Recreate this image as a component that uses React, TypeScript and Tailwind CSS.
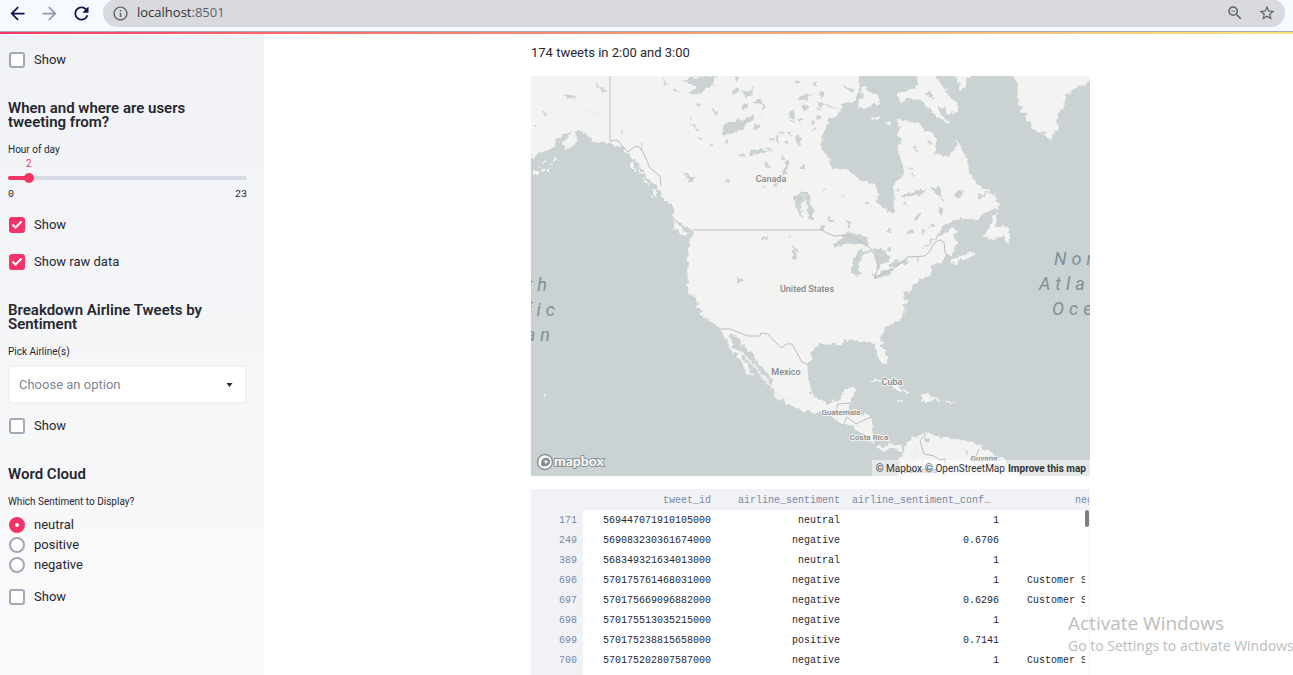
import type { ReactNode } from "react";
import {
  MdArrowBack,
  MdArrowForward,
  MdInfoOutline,
  MdOutlineZoomOut,
  MdRefresh,
  MdStarBorder,
} from "react-icons/md";

const land = [
  // North and Central America
  "520,60 531,160 538,154 546,152 553,146 558,140 563,134 571,131 569,136 562,143 564,149 573,146 577,140 575,134 580,131 586,133 591,139 600,142 610,143 617,145 626,151 631,158 640,165 645,174 652,182 660,188 662,196 668,204 674,208 672,217 682,224 690,229 693,235 690,241 688,260 687,272 689,293 697,298 698,308 705,318 713,323 720,329 727,342 732,353 740,358 745,370 753,378 748,366 742,357 737,350 731,341 729,333 735,334 742,345 755,358 765,370 773,380 773,392 783,402 797,408 813,413 823,412 835,417 840,422 853,427 858,432 870,440 877,448 885,452 890,448 897,448 901,455 899,468 897,490 1030,490 1019,473 1010,465 995,455 983,448 973,442 963,440 953,438 943,438 933,435 925,432 910,438 903,450 901,445 890,443 885,447 878,445 873,437 872,425 873,417 860,413 850,412 850,402 857,388 845,388 841,400 827,403 815,398 810,390 807,374 810,362 812,352 818,345 842,344 843,341 862,340 872,343 875,342 877,355 882,363 887,366 887,357 882,345 880,333 890,325 900,320 907,310 902,305 907,302 903,295 905,290 909,293 913,285 920,280 930,276 932,265 943,260 948,256 953,253 957,243 952,237 958,232 953,228 943,233 932,243 922,248 935,237 947,223 960,218 977,220 987,212 999,208 997,197 983,187 977,183 970,172 965,155 957,142 953,152 947,158 935,153 935,135 925,132 918,122 898,120 900,145 897,152 903,160 905,173 893,185 895,213 888,213 878,202 877,185 863,182 847,170 832,168 828,155 821,152 823,135 830,118 840,113 843,103 855,103 860,88 858,60",
  // Southampton Island
  "862,85 870,92 878,97 880,103 873,103 866,111 857,107 861,98",
  // Baffin Island
  "918,70 916,88 905,90 897,93 899,100 916,98 927,107 938,118 950,124 942,114 937,105 945,110 953,116 957,112 956,103 948,94 941,85 937,78 936,70",
  "952,70 958,80 960,90 964,88 967,78 972,74 970,60",
  "871,119 878,114 880,117 873,121",
  "887,122 891,121 891,126 888,126",
  // Greenland
  "1008,60 1017,85 1019,105 1027,118 1037,133 1045,131 1050,141 1057,128 1060,112 1067,95 1077,87 1084,84 1100,76 1100,60",
  // Newfoundland and Nova Scotia
  "998,211 993,217 989,228 984,237 993,238 1004,237 1007,241 1011,243 1008,234 1006,227 1000,226 995,226",
  "951,261 960,256 970,253 977,254 968,258 958,262 953,264",
  // Vancouver Island
  "671,218 677,224 685,232 690,236 684,235 676,229",
  // Caribbean islands
  "869,382 876,379 885,380 896,386 904,390 912,393 903,393 894,388 882,382",
  "921,394 929,394 940,400 932,401 926,403 920,400",
  "897,401 904,402 900,403",
  "947,401 953,401 952,403 947,403",
  "914,401 918,401 916,402",
  "544,392 547,395 544,399",
];

const water = [
  // Great Bear, Great Slave, Athabasca, Winnipeg
  "682,80 692,77 717,76 713,86 706,88 701,94 690,94 696,86",
  "722,134 725,123 742,120 756,114 750,122 738,132 728,135",
  "747,153 755,149 775,150 762,153 752,155",
  "793,198 801,190 805,198 800,206 803,218 800,217 796,206",
  "803,192 808,192 813,208 813,220 809,219 807,206",
  "782,176 785,162 789,160 789,170",
  // Great Lakes
  "833,246 843,236 850,231 858,234 866,238 869,246 858,243 845,244 837,247",
  "853,258 858,251 866,249 872,252 862,255 859,264 860,275 855,278 852,268",
  "872,249 882,249 890,256 889,263 883,262 880,268 877,270 876,258",
  "874,276 882,271 893,268 893,271 880,279 874,279",
  "889,265 896,261 907,260 907,263 895,267 889,267",
  // Canadian Shield and Quebec
  "689,117 691,116 690,123 695,126 700,129 698,130 690,124",
  "683,170 689,176 695,178 691,183 687,177",
  "724,180 731,182 728,184",
  "788,112 794,108 795,118 789,118",
  "799,97 812,94 810,98 800,101",
  "820,92 825,95 822,97 818,95",
  "777,133 780,135 778,144 775,141",
  "796,135 802,138 800,146 797,142",
  "753,103 760,98 765,107 761,114 763,107 759,103",
  "713,108 718,112 717,114 712,110",
  "750,91 754,84 751,96 746,98 741,92",
  "734,76 740,77 738,82 735,80",
  "841,84 850,88 855,90 852,93 846,88",
  "813,101 826,104 840,110 828,107",
  "924,92 932,93 934,99 928,98",
  "901,195 911,192 921,190 926,188 922,194 905,198",
  "931,187 940,187 942,196 944,205 940,197 933,190",
  "954,195 961,188 964,192 957,199",
  "978,196 990,190 985,195 979,199",
  "937,210 940,206 943,213 939,217",
  "914,220 919,213 921,215 916,221",
  "928,227 933,224 935,227",
  "903,203 907,202 909,208 904,205",
  "828,218 835,219 834,222 829,221",
  "846,221 851,221 851,227 847,228",
  "821,189 825,187 825,190 821,191",
  "840,194 845,195 843,197",
  "819,226 825,225 825,230 820,230",
  "810,204 813,210 813,219 810,217",
  "912,146 918,148 917,150 912,148",
  "907,168 913,166 912,170 908,169",
  "911,173 917,176 913,177",
  "787,236 791,235 791,238",
  "761,238 769,237 764,240",
  "794,246 797,248 796,260 794,258",
  "738,277 743,280 741,284 738,281",
  "792,256 796,257 794,260",
  "925,435 929,441 927,445 924,441",
  "966,449 969,452 966,456",
  "561,95 572,95 578,98 569,97",
  "595,82 600,88 608,91 601,91 596,86",
  "664,76 667,85 666,87 664,81",
  "619,129 623,132 622,134",
  "642,144 644,145 643,151 641,149",
];

const specks: [number, number, number][] = [
  [698, 105, 2], [757, 126, 3], [711, 145, 2], [727, 141, 2], [742, 155, 2], [700, 138, 1], [767, 165, 3], [803, 167, 3],
  [775, 185, 2], [763, 187, 2], [797, 83, 3], [805, 107, 3], [813, 122, 2], [818, 117, 3], [790, 134, 2], [786, 142, 2],
  [745, 106, 3], [735, 91, 3], [778, 137, 2], [819, 108, 2], [889, 231, 2], [911, 232, 3], [923, 232, 2], [892, 174, 1],
  [816, 85, 2], [801, 121, 2], [771, 139, 2], [820, 104, 2], [782, 133, 2], [889, 249, 2], [793, 121, 2], [807, 95, 2],
  [676, 91, 2], [545, 114, 1], [535, 126, 1], [930, 143, 2], [783, 158, 2], [899, 190, 2], [868, 203, 2], [815, 130, 2],
];

const inlets: [number, number][] = [
  [630, 163], [634, 168], [638, 166], [640, 172], [644, 178], [648, 183], [652, 190], [650, 195], [657, 185],
  [645, 170], [655, 193], [637, 171], [642, 165], [631, 158], [554, 157], [549, 163], [543, 160], [538, 166],
  [534, 171], [558, 161], [548, 168], [541, 169],
];

const borders = [
  "610,76 610,141 617,140 628,152 634,147 638,146 643,152 650,168 660,176 661,186",
  "692,230 822,230",
  "820,229 825,232 834,236 848,235 858,240 870,248 877,258 878,268 874,278 893,269 908,257 925,256 929,252 935,242 940,240 944,242 945,252 948,257",
  "918,257 918,262",
  "720,329 730,329 748,336 760,336 761,333 768,334 777,344 782,348 786,344 792,344 802,362 809,365",
  "835,412 838,404 850,403 850,409 841,416",
  "844,423 847,417 856,424 866,419 873,417",
  "876,447 875,440",
  "926,433 920,441 924,454 934,456 940,460 945,459 946,470",
  "900,453 904,452",
  "979,449 976,456 982,463",
  "985,456 990,466 1000,464",
];

function MapLabel({ x, y, size, children }: { x: number; y: number; size: number; children: ReactNode }) {
  return (
    <text
      x={x}
      y={y}
      fontSize={size}
      textAnchor="middle"
      className="fill-[#858889] stroke-[#f3f3f2] stroke-2 font-['Roboto',sans-serif] font-medium [paint-order:stroke]"
    >
      {children}
    </text>
  );
}

function OceanLabel({ lines, anchor }: { lines: [string, number, number][]; anchor: "start" | "end" }) {
  return (
    <g className="fill-[#7f9191] font-['Roboto',sans-serif] text-[18px] italic tracking-[5px]">
      {lines.map(([text, x, y]) => (
        <text key={text} x={x} y={y} textAnchor={anchor}>
          {text}
        </text>
      ))}
    </g>
  );
}

function TweetMap() {
  return (
    <div className="relative h-[400px] overflow-hidden bg-[#cad2d3]">
      <svg
        className="h-full w-full"
        viewBox="531 76 559 400"
        preserveAspectRatio="xMidYMid slice"
        role="img"
        aria-label="Map of North America"
      >
        <defs>
          <filter id="coast" filterUnits="userSpaceOnUse" x="500" y="50" width="620" height="450">
            <feTurbulence type="fractalNoise" baseFrequency="0.16" numOctaves="3" seed="7" />
            <feDisplacementMap in="SourceGraphic" scale="8" xChannelSelector="R" yChannelSelector="G" />
          </filter>
          <filter id="lake" filterUnits="userSpaceOnUse" x="500" y="50" width="620" height="450">
            <feTurbulence type="fractalNoise" baseFrequency="0.22" numOctaves="2" seed="3" />
            <feDisplacementMap in="SourceGraphic" scale="7" xChannelSelector="R" yChannelSelector="G" />
          </filter>
        </defs>
        <rect x="400" y="0" width="900" height="600" fill="#cad2d3" />
        <g filter="url(#coast)" fill="#f3f3f2">
          {land.map((points) => (
            <polygon key={points} points={points} />
          ))}
          {inlets.map(([x, y], i) => (
            <rect key={`${x}-${y}`} x={x} y={y} width={i % 3 === 0 ? 4 : 2} height={i % 2 === 0 ? 4 : 2} />
          ))}
        </g>
        <g filter="url(#lake)" fill="#cad2d3">
          {water.map((points) => (
            <polygon key={points} points={points} />
          ))}
          {specks.map(([x, y, r]) => (
            <ellipse key={`${x}-${y}`} cx={x} cy={y} rx={r} ry={r > 1 ? r - 0.5 : 1} />
          ))}
        </g>
        <g fill="none" stroke="#eeeeec" strokeWidth="2" filter="url(#lake)">
          <polyline points="556,120 566,112 582,108 596,114 606,122" />
          <polyline points="693,280 702,298 714,316" />
          <polyline points="738,350 752,364 766,380 778,394" />
          <polyline points="776,396 790,398 804,402" />
          <polyline points="918,446 912,460 908,474" />
        </g>
        <g fill="none" stroke="#bcbebe" strokeWidth="1">
          {borders.map((points) => (
            <polyline key={points} points={points} />
          ))}
        </g>
        <MapLabel x={771} y={182} size={9}>Canada</MapLabel>
        <MapLabel x={807} y={292} size={9}>United States</MapLabel>
        <MapLabel x={786} y={375} size={9}>Mexico</MapLabel>
        <MapLabel x={892} y={385} size={9}>Cuba</MapLabel>
        <MapLabel x={841} y={415} size={8}>Guatemala</MapLabel>
        <MapLabel x={869} y={440} size={8}>Costa Rica</MapLabel>
        <MapLabel x={984} y={461} size={8}>Guyana</MapLabel>
        <MapLabel x={920} y={473} size={8}>Colombia</MapLabel>
        <OceanLabel anchor="start" lines={[["North", 1054, 265], ["Atlantic", 1039, 290], ["Ocean", 1052, 315]]} />
        <OceanLabel anchor="end" lines={[["North", 552, 291], ["Pacific", 560, 316], ["Ocean", 555, 341]]} />
      </svg>

      <a href="#mapbox" aria-label="Mapbox" className="absolute bottom-1 left-1">
        <svg width="74" height="20" viewBox="535 452 74 20">
          <circle cx="545" cy="462" r="7.5" fill="#fff" stroke="#8b9293" strokeWidth="1.5" />
          <path d="M541.3 465.9c-.8-4.2.6-8 4.6-8.2 3-.1 4.6 2.3 4.3 4.4-.6 3.8-4.7 4.8-8.9 3.8Z" fill="#858c8d" />
          <path d="m546 459.2.8 1.8 1.8.8-1.8.8-.8 1.8-.8-1.8-1.8-.8 1.8-.8Z" fill="#fff" />
          <text
            x="554"
            y="466"
            fontSize="14"
            className="fill-white stroke-[#8b9293] stroke-2 font-['Lato',sans-serif] font-bold [paint-order:stroke]"
          >
            mapbox
          </text>
        </svg>
      </a>

      <div className="absolute right-0 bottom-0 flex h-4 items-center gap-[3px] bg-white/50 px-1 font-['Roboto',sans-serif] text-[10px] text-[#333]">
        <a href="#about-mapbox">© Mapbox</a>
        <a href="#openstreetmap">© OpenStreetMap</a>
        <a href="#improve" className="font-bold">Improve this map</a>
      </div>
    </div>
  );
}

const rows = [
  ["171", "569447071910105000", "neutral", "1", ""],
  ["249", "569083230361674000", "negative", "0.6706", ""],
  ["389", "568349321634013000", "neutral", "1", ""],
  ["696", "570175761468031000", "negative", "1", "Customer Service Issue"],
  ["697", "570175669096882000", "negative", "0.6296", "Customer Service Issue"],
  ["698", "570175513035215000", "negative", "1", ""],
  ["699", "570175238815658000", "positive", "0.7141", ""],
  ["700", "570175202807587000", "negative", "1", "Customer Service Issue"],
];

function TweetTable() {
  return (
    <div className="relative mt-[13px] h-[300px] overflow-hidden border-r border-[#f0f2f6]">
      <table className="w-[634px] table-fixed border-collapse text-right font-['Liberation_Mono',monospace] text-[10px] leading-[18px] text-[#262730]">
        <colgroup>
          <col className="w-[52px]" />
          <col className="w-[134px]" />
          <col className="w-[129px]" />
          <col className="w-[159px]" />
          <col className="w-[160px]" />
        </colgroup>
        <thead>
          <tr className="h-[21px] bg-[#f0f2f6] text-[#7a87a6]">
            <td />
            <th scope="col" className="px-1.5 pt-0.5 font-normal">tweet_id</th>
            <th scope="col" className="px-1.5 pt-0.5 font-normal">airline_sentiment</th>
            <th scope="col" className="truncate pt-0.5 pr-[11px] pl-1.5 font-normal">airline_sentiment_confidence</th>
            <th scope="col" className="px-1.5 pt-0.5 font-normal">negativereason</th>
          </tr>
        </thead>
        <tbody>
          {rows.map(([index, ...cells]) => (
            <tr key={index} className="h-5">
              <th scope="row" className="bg-[#f0f2f6] px-1.5 pt-0.5 font-normal text-[#7a87a6]">{index}</th>
              {cells.map((cell, i) => (
                <td key={i} className="px-1.5 pt-0.5">{cell}</td>
              ))}
            </tr>
          ))}
          <tr className="h-5">
            <th scope="row" className="bg-[#f0f2f6]" />
          </tr>
        </tbody>
      </table>
      <div className="absolute top-[21px] right-0 bottom-0 w-1 bg-white">
        <div className="h-[17px] rounded-full bg-[#7f7f7f]" />
      </div>
    </div>
  );
}

function Checkbox({ label, checked, className = "" }: { label: string; checked?: boolean; className?: string }) {
  return (
    <label className={`flex h-5 items-center gap-[9px] pl-px text-[13px] ${className}`}>
      <span className="relative grid size-4 place-items-center">
        <input
          type="checkbox"
          defaultChecked={checked}
          className="peer size-4 appearance-none rounded-[3px] border-2 border-[#a3a8b8] bg-white checked:border-[#f63366] checked:bg-[#f63366]"
        />
        <svg
          className="pointer-events-none absolute hidden size-4 peer-checked:block"
          viewBox="0 0 16 16"
          fill="none"
          stroke="#fff"
          strokeWidth="2"
        >
          <path d="m3.500 7.500 3 3 6-6" />
        </svg>
      </span>
      {label}
    </label>
  );
}

function Radio({ label, checked }: { label: string; checked?: boolean }) {
  return (
    <label className="flex h-5 items-center gap-[9px] pl-px text-[13px]">
      <input
        type="radio"
        name="sentiment"
        defaultChecked={checked}
        className="size-4 appearance-none rounded-full border-2 border-[#a3a8b8] bg-white checked:border-[6px] checked:border-[#f63366]"
      />
      {label}
    </label>
  );
}

function SectionTitle({ children }: { children: ReactNode }) {
  return <h3 className="mt-[31px] pr-4 text-[15px] leading-[14px] font-semibold">{children}</h3>;
}

function HourSlider() {
  const max = 23;
  const value = 2;
  const filled = `${(value / max) * 100}%`;
  return (
    <div className="text-[10px]">
      <label htmlFor="hour" className="mt-[13px] block leading-4">Hour of day</label>
      <div className="h-3 leading-3 text-[#f63366]">
        <span className="inline-block -translate-x-1/2" style={{ marginLeft: filled }}>{value}</span>
      </div>
      <div className="relative flex h-4 items-center">
        <div className="h-1 w-full overflow-hidden rounded-full bg-[#d5dae5]">
          <div className="h-full bg-[#f63366]" style={{ width: filled }} />
        </div>
        <input
          id="hour"
          type="range"
          min={0}
          max={max}
          defaultValue={value}
          className="absolute -inset-x-[5px] h-4 appearance-none bg-transparent [&::-webkit-slider-thumb]:size-2.5 [&::-webkit-slider-thumb]:appearance-none [&::-webkit-slider-thumb]:rounded-full [&::-webkit-slider-thumb]:bg-[#f63366]"
        />
      </div>
      <div className="flex justify-between pt-px font-['Liberation_Mono',monospace] leading-4">
        <span>0</span>
        <span>{max}</span>
      </div>
    </div>
  );
}

function Sidebar() {
  return (
    <aside className="w-[264px] shrink-0 bg-linear-to-b from-[#f0f2f6] to-[#fafafa] pr-[17px] pl-2">
      <div className="mx-0.5 h-px bg-white" />
      <Checkbox label="Show" className="mt-[15px]" />

      <SectionTitle>When and where are users tweeting from?</SectionTitle>
      <HourSlider />
      <Checkbox label="Show" checked className="mt-3" />
      <Checkbox label="Show raw data" checked className="mt-[17px]" />

      <SectionTitle>Breakdown Airline Tweets by Sentiment</SectionTitle>
      <label htmlFor="airline" className="mt-[13px] block text-[10px] leading-4">Pick Airline(s)</label>
      <div className="relative mt-[5px]">
        <select
          id="airline"
          defaultValue=""
          className="h-[39px] w-full appearance-none rounded-[3px] border-2 border-[#f0f2f6] bg-white px-[9px] text-[13px] text-[#808495]"
        >
          <option value="">Choose an option</option>
        </select>
        <svg className="pointer-events-none absolute top-[18px] right-[14px]" width="7" height="4" viewBox="0 0 7 4">
          <path d="M0.500 0h6L3.500 4Z" fill="#262730" />
        </svg>
      </div>
      <Checkbox label="Show" className="mt-3" />

      <SectionTitle>Word Cloud</SectionTitle>
      <fieldset className="mt-[13px]">
        <legend className="pb-[5px] text-[10px] leading-4">Which Sentiment to Display?</legend>
        <Radio label="neutral" checked />
        <Radio label="positive" />
        <Radio label="negative" />
      </fieldset>
      <Checkbox label="Show" className="mt-3" />
    </aside>
  );
}

function BrowserBar() {
  return (
    <header className="flex h-[31px] shrink-0 bg-[#f6f9ff] pr-2 pl-px text-[#1a0d4d]">
      <div className="flex h-[26px] w-[102px] shrink-0 items-center">
        <button type="button" aria-label="Back" className="grid w-8 place-items-center">
          <MdArrowBack size={21} />
        </button>
        <button type="button" aria-label="Forward" className="grid w-8 place-items-center text-[#9a95b8]">
          <MdArrowForward size={21} />
        </button>
        <button type="button" aria-label="Reload" className="grid w-8 place-items-center">
          <MdRefresh size={21} />
        </button>
      </div>
      <div className="-mt-px flex h-7 flex-1 items-center rounded-full bg-[#d9dadf] pr-0.5 pl-[9px] text-[#5f6368]">
        <MdInfoOutline size={17} />
        <a href="#page" className="ml-2 flex-1 font-['Open_Sans',sans-serif] text-[13px]">
          <span className="text-[#303136]">localhost</span>:8501
        </a>
        <button type="button" aria-label="Zoom" className="grid w-8 place-items-center">
          <MdOutlineZoomOut size={18} />
        </button>
        <button type="button" aria-label="Bookmark" className="grid w-8 place-items-center">
          <MdStarBorder size={18} />
        </button>
      </div>
    </header>
  );
}

export default function App() {
  return (
    <div className="relative flex h-screen flex-col overflow-hidden bg-white font-['Roboto',sans-serif] text-[#262730]">
      <BrowserBar />
      <div className="h-[3px] shrink-0 border-t border-[#a9abb5] bg-linear-to-r from-[#f63366] to-[#fae57a]" />
      <div className="flex min-h-0 flex-1">
        <Sidebar />
        <main className="min-w-0 flex-1 overflow-hidden pr-[203px] pl-[267px]">
          <p className="mt-[9px] mb-[13px] text-[13px] leading-5">174 tweets in 2:00 and 3:00</p>
          <TweetMap />
          <TweetTable />
        </main>
      </div>
      <div className="pointer-events-none absolute top-[611px] left-[1068px] font-['Open_Sans',sans-serif] whitespace-nowrap text-[#bcbcbc]">
        <p className="text-[19px] leading-6">Activate Windows</p>
        <p className="text-[14px] leading-[22px]">Go to Settings to activate Windows.</p>
      </div>
    </div>
  );
}
